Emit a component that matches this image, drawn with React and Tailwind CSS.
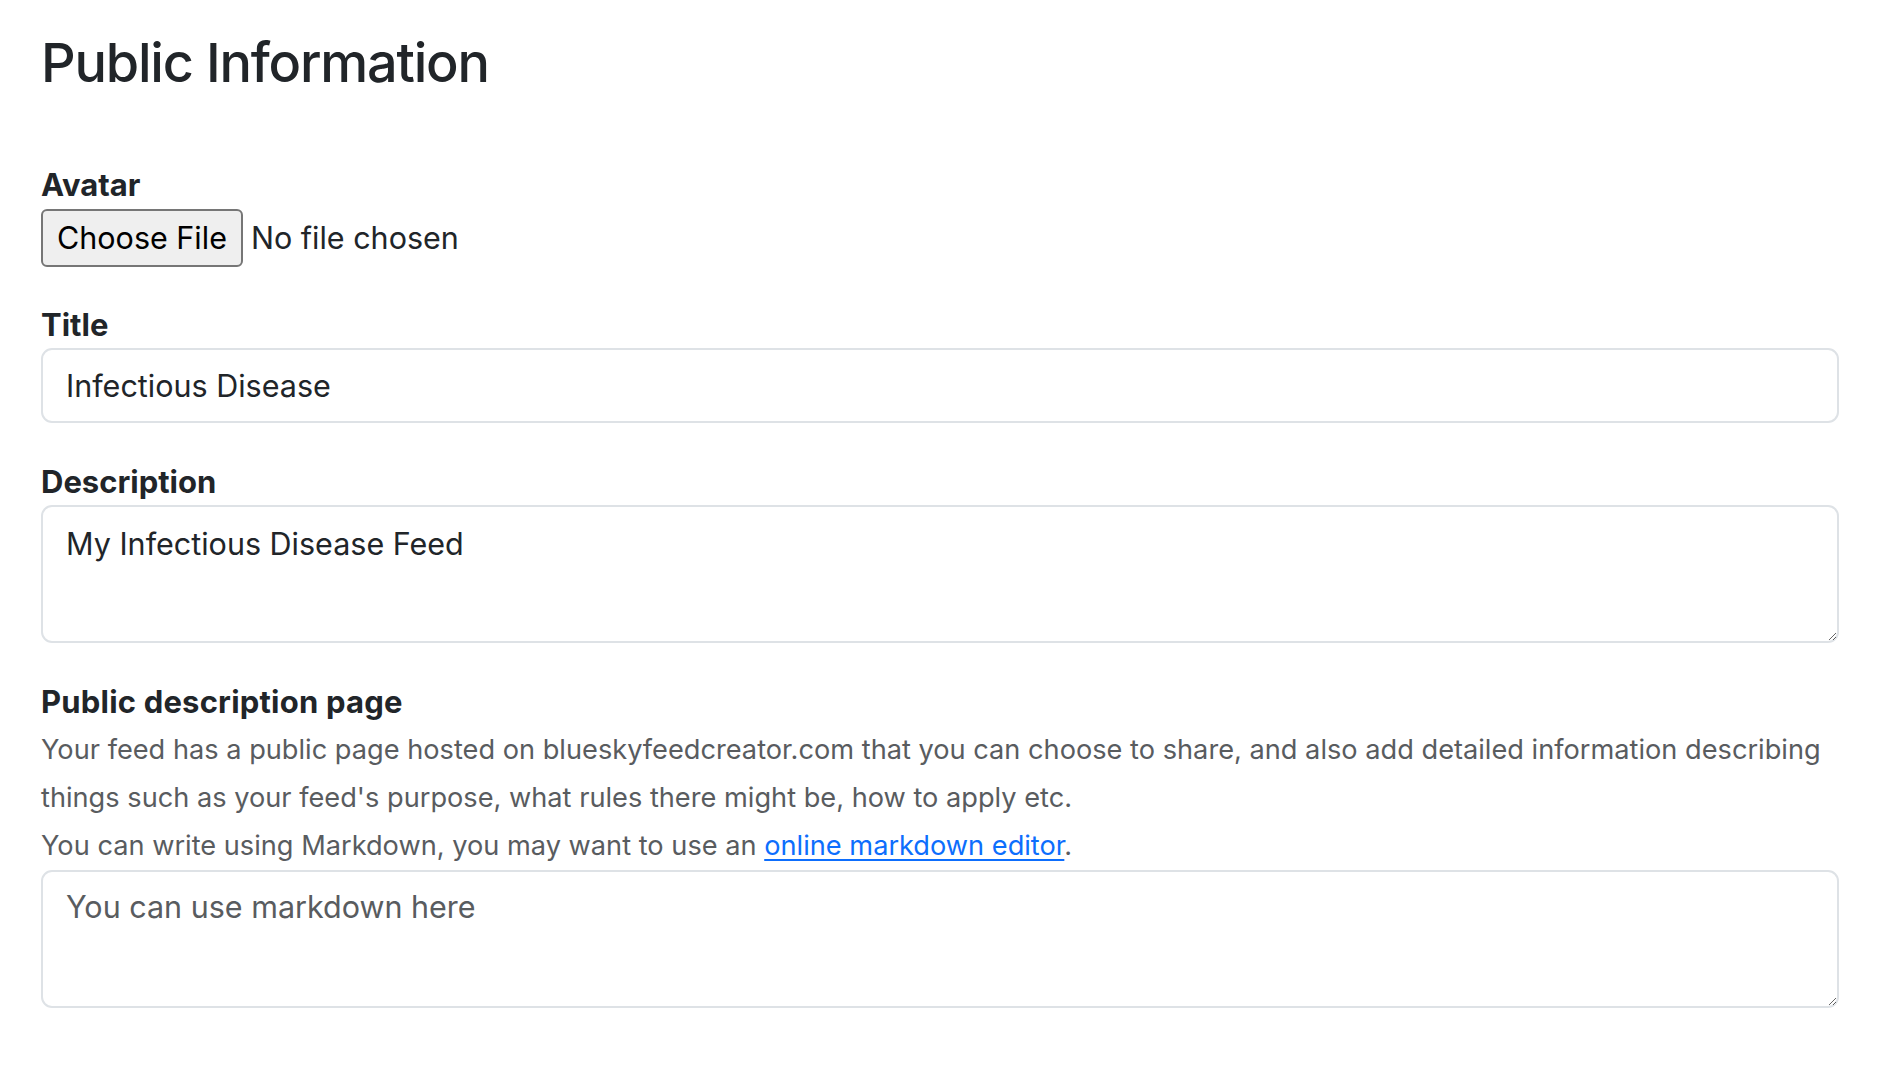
export default function App() {
  const font = { fontFamily: "Inter, 'Noto Sans', Arial, sans-serif" };
  return (
    <div className="min-h-screen bg-white text-[#212529]" style={font}>
      <div className="ml-[41px] w-[1798px] pt-[29px]">
        <h2 className="text-[54px] leading-[67px] font-medium tracking-[-1.2px]">Public Information</h2>

        <div className="mt-[68px]">
          <label className="block text-[31px] leading-[42px] font-bold">Avatar</label>
          <div className="mt-[3px] flex items-center">
            <button className="h-[58px] px-[14px] rounded-[6px] border-2 border-[#767676] bg-[#efefef] text-[30.5px] text-black leading-none">
              Choose File
            </button>
            <span className="ml-[8px] text-[30.5px] text-[#212529]">No file chosen</span>
          </div>
        </div>

        <div className="mt-[37px]">
          <label className="block text-[31px] leading-[42px] font-bold">Title</label>
          <input
            readOnly
            defaultValue="Infectious Disease"
            className="mt-[2px] block w-full h-[75px] px-[23px] rounded-[11px] border-2 border-[#dee2e6] text-[30.5px] text-[#212529] outline-none"
          />
        </div>

        <div className="mt-[38px]">
          <label className="block text-[31px] leading-[42px] font-bold">Description</label>
          <textarea
            readOnly
            defaultValue="My Infectious Disease Feed"
            className="mt-[2px] block w-full h-[138px] px-[23px] pt-[15px] rounded-[11px] border-2 border-[#dee2e6] text-[30.5px] leading-[44px] text-[#212529] outline-none"
          />
        </div>

        <div className="mt-[38px]">
          <label className="block text-[31px] leading-[42px] font-bold tracking-[0.2px]">Public description page</label>
          <p className="mt-[3px] text-[27.2px] leading-[48px] text-[#595c5f] whitespace-nowrap">
            Your feed has a public page hosted on blueskyfeedcreator.com that you can choose to share, and also add detailed information describing
            <br />
            things such as your feed's purpose, what rules there might be, how to apply etc.
          </p>
          <p className="text-[27.2px] leading-[48px] text-[#595c5f] whitespace-nowrap">
            You can write using Markdown, you may want to use an{" "}
            <a href="#" className="text-[#0d6efd] underline underline-offset-[4px]">online markdown editor</a>.
          </p>
          <textarea
            readOnly
            placeholder="You can use markdown here"
            className="block w-full h-[138px] px-[23px] pt-[13px] rounded-[11px] border-2 border-[#dee2e6] text-[30.5px] leading-[44px] text-[#212529] placeholder:text-[#595c5f] outline-none"
          />
        </div>
      </div>
    </div>
  );
}
